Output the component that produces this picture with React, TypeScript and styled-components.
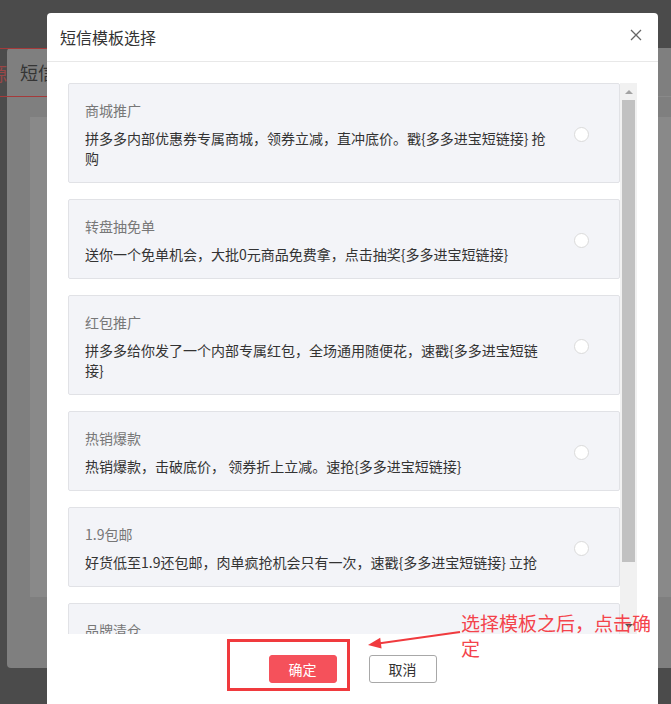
import React from 'react';
import styled, { createGlobalStyle } from 'styled-components';

type Template = {
  title: string;
  content: string;
};

const templates: Template[] = [
  {
    title: '商城推广',
    content: '拼多多内部优惠券专属商城，领券立减，直冲底价。戳{多多进宝短链接} 抢购'
  },
  {
    title: '转盘抽免单',
    content: '送你一个免单机会，大批0元商品免费拿，点击抽奖{多多进宝短链接}'
  },
  {
    title: '红包推广',
    content: '拼多多给你发了一个内部专属红包，全场通用随便花，速戳{多多进宝短链接}'
  },
  {
    title: '热销爆款',
    content: '热销爆款，击破底价， 领券折上立减。速抢{多多进宝短链接}'
  },
  {
    title: '1.9包邮',
    content: '好货低至1.9还包邮，肉单疯抢机会只有一次，速戳{多多进宝短链接} 立抢'
  },
  {
    title: '品牌清仓',
    content: '大牌清仓，低至1折，库存有限，速戳{多多进宝短链接}'
  }
];

const GlobalStyle = createGlobalStyle`
  html, body {
    margin: 0;
    padding: 0;
  }

  body {
    width: 671px;
    height: 704px;
    overflow: hidden;
    background: #4b4b4b;
    font-family: "Noto Sans CJK SC", "Noto Sans", sans-serif;
  }

  * {
    box-sizing: border-box;
  }
`;

const Stage = styled.div`
  position: relative;
  width: 671px;
  height: 704px;
  overflow: hidden;
  background: #4b4b4b;
`;

/* the dimmed dialog behind */
const BackModal = styled.div`
  position: absolute;
  left: 7px;
  top: 48px;
  width: 700px;
  height: 620px;
  border-radius: 4px;
  background: #7f7f7f;
`;

const BackHeader = styled.div`
  height: 49px;
  display: flex;
  align-items: center;
  padding-left: 13px;
  font-size: 18px;
  color: #353535;
  border-bottom: 1px solid #898989;
`;

const BackBody = styled.div`
  padding: 20px 0 0 23px;
`;

const BackPanel = styled.div`
  height: 480px;
  background: #898989;
`;

const BackTab = styled.div`
  position: absolute;
  left: -40px;
  top: 48px;
  width: 87px;
  height: 49px;
  border-top: 1px solid #a53a3a;
  border-bottom: 1px solid #a53a3a;
  overflow: hidden;
  padding-left: 26px;
  display: flex;
  align-items: center;
  font-size: 18px;
  color: #9a4646;
`;

const TabFill = styled.span`
  display: inline-block;
  width: 21px;
  overflow: hidden;
  direction: rtl;
  white-space: nowrap;
`;

/* front dialog */
const Dialog = styled.div`
  position: absolute;
  left: 47px;
  top: 13px;
  width: 611px;
  height: 720px;
  background: #ffffff;
  border-radius: 4px 4px 0 0;
  display: flex;
  flex-direction: column;
`;

const Header = styled.div`
  height: 49px;
  flex: none;
  display: flex;
  align-items: center;
  justify-content: space-between;
  padding: 0 15px 0 13px;
  border-bottom: 1px solid #e8e8e8;
`;

const Title = styled.div`
  font-size: 16px;
  color: #333333;
`;

const CloseButton = styled.div`
  width: 14px;
  height: 14px;
  display: flex;
  align-items: center;
  justify-content: center;
  margin-top: -4px;
`;

const Body = styled.div`
  padding: 21px 21px 0 21px;
`;

const ScrollArea = styled.div`
  height: 551px;
  display: flex;
`;

const List = styled.div`
  flex: 1;
  overflow: hidden;
  display: flex;
  flex-direction: column;
  gap: 16px;
`;

const Card = styled.div`
  flex: none;
  display: flex;
  align-items: center;
  justify-content: space-between;
  padding: 16px 30px 14px 16px;
  background: #f3f4f8;
  border: 1px solid #e1e2e6;
  border-radius: 2px;
`;

const CardText = styled.div`
  width: 462px;
  flex: none;
`;

const CardTitle = styled.div`
  font-size: 14px;
  line-height: 20px;
  color: #777777;
  margin-bottom: 8px;
`;

const CardContent = styled.div`
  font-size: 14px;
  line-height: 20px;
  color: #333333;
`;

const Radio = styled.span`
  width: 15px;
  height: 15px;
  flex: none;
  border-radius: 50%;
  background: #ffffff;
  border: 1px solid #dadada;
`;

const ScrollBar = styled.div`
  width: 17px;
  flex: none;
  display: flex;
  flex-direction: column;
  background: #f1f1f1;
`;

const ArrowButton = styled.div<{ $down?: boolean }>`
  height: 17px;
  flex: none;
  display: flex;
  align-items: center;
  justify-content: center;

  &::before {
    content: '';
    width: 0;
    height: 0;
    border-left: 4px solid transparent;
    border-right: 4px solid transparent;
    ${(props) =>
      props.$down
        ? 'border-top: 4px solid #505050;'
        : 'border-bottom: 4px solid #a3a3a3;'}
  }
`;

const Track = styled.div`
  flex: 1;
  padding: 0 2px;
`;

const Thumb = styled.div`
  height: 462px;
  background: #c1c1c1;
`;

const Footer = styled.div`
  padding-top: 21px;
  display: flex;
  justify-content: center;
  gap: 32px;
`;

const Button = styled.button<{ $primary?: boolean }>`
  width: 68px;
  height: 28px;
  padding: 0;
  border-radius: 3px;
  font-family: inherit;
  font-size: 14px;
  cursor: pointer;
  border: 1px solid ${(props) => (props.$primary ? '#f5515b' : '#a8a8a8')};
  background: ${(props) => (props.$primary ? '#f5515b' : '#ffffff')};
  color: ${(props) => (props.$primary ? '#ffffff' : '#333333')};
`;

/* red annotations drawn on top of the screenshot */
const MarkBox = styled.div`
  position: absolute;
  left: 227px;
  top: 639px;
  width: 123px;
  height: 52px;
  border: 3px solid #f03a3e;
`;

const MarkNote = styled.div`
  position: absolute;
  left: 461px;
  top: 610px;
  width: 197px;
  font-size: 19px;
  line-height: 25px;
  color: #f4434b;
`;

const MarkArrow = styled.svg`
  position: absolute;
  left: 360px;
  top: 625px;
  width: 110px;
  height: 30px;
  overflow: visible;
`;

const App = () => {
  return (
    <Stage>
      <GlobalStyle />
      <BackModal>
        <BackHeader>短信模板</BackHeader>
        <BackBody>
          <BackPanel />
        </BackBody>
      </BackModal>
      <BackTab>
        <TabFill>资源</TabFill>
      </BackTab>

      <Dialog>
        <Header>
          <Title>短信模板选择</Title>
          <CloseButton>
            <svg width="12" height="12" viewBox="0 0 12 12">
              <path
                d="M1 1 L11 11 M11 1 L1 11"
                stroke="#666666"
                strokeWidth="1.3"
                fill="none"
              />
            </svg>
          </CloseButton>
        </Header>
        <Body>
          <ScrollArea>
            <List>
              {templates.map((item, index) => (
                <Card key={index}>
                  <CardText>
                    <CardTitle>{item.title}</CardTitle>
                    <CardContent>{item.content}</CardContent>
                  </CardText>
                  <Radio />
                </Card>
              ))}
            </List>
            <ScrollBar>
              <ArrowButton />
              <Track>
                <Thumb />
              </Track>
              <ArrowButton $down />
            </ScrollBar>
          </ScrollArea>
        </Body>
        <Footer>
          <Button $primary>确定</Button>
          <Button>取消</Button>
        </Footer>
      </Dialog>

      <MarkBox />
      <MarkArrow viewBox="0 0 110 30">
        <line
          x1="100"
          y1="7"
          x2="20"
          y2="18.3"
          stroke="#f03a3e"
          strokeWidth="2"
        />
        <polygon points="8,20 21.6,23.6 20.2,12.8" fill="#f03a3e" />
      </MarkArrow>
      <MarkNote>选择模板之后，点击确定</MarkNote>
    </Stage>
  );
};

export default App;
